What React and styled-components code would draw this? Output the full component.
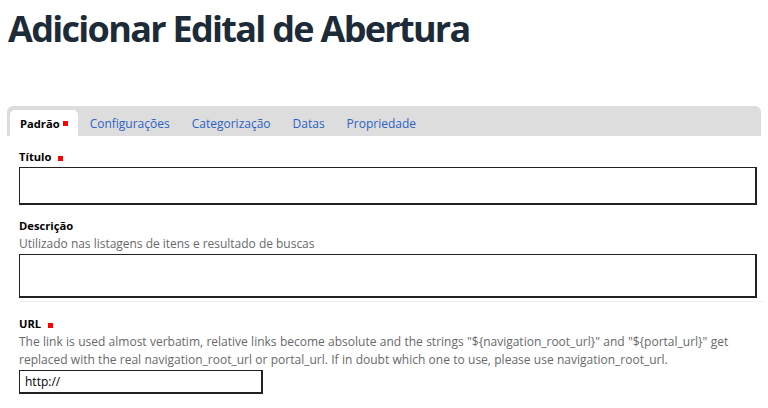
import React from 'react';
import styled, { createGlobalStyle } from 'styled-components';

const GlobalStyle = createGlobalStyle`
  body {
    margin: 0;
    background: #ffffff;
    font-family: "Open Sans", "Liberation Sans", sans-serif;
    color: #000;
  }
`;

const URL_HELP =
  'The link is used almost verbatim, relative links become absolute and the strings ' +
  '"${navigation_root_url}" and "${portal_url}" get replaced with the real ' +
  'navigation_root_url or portal_url. If in doubt which one to use, please use navigation_root_url.';

const TABS = ['Configurações', 'Categorização', 'Datas', 'Propriedade'];

const Page = styled.div`
  width: 768px;
  height: 408px;
  overflow: hidden;
`;

const Heading = styled.h1`
  margin: 0;
  padding: 4px 0 0 8px;
  font-size: 36px;
  line-height: 50px;
  font-weight: 700;
  letter-spacing: -1.7px;
  color: #1d2a38;
  height: 102px;
`;

const TabBar = styled.nav`
  display: flex;
  align-items: flex-end;
  margin-left: 7px;
  width: 754px;
  height: 30px;
  padding: 0 3px;
  box-sizing: border-box;
  background: #dddddd;
  border-radius: 6px 6px 0 0;
`;

const Tab = styled.a`
  display: flex;
  align-items: center;
  height: 26px;
  padding: 0 ${({ $active }) => ($active ? '10px' : '11px')};
  margin-right: ${({ $active }) => ($active ? '1px' : '0')};
  font-size: ${({ $active }) => ($active ? '11.2px' : '12px')};
  font-weight: ${({ $active }) => ($active ? 700 : 400)};
  color: ${({ $active }) => ($active ? '#000' : '#2b62c6')};
  background: ${({ $active }) => ($active ? '#fff' : 'transparent')};
  border-radius: 5px 5px 0 0;
  text-decoration: none;
`;

const Required = styled.span`
  display: inline-block;
  width: 5px;
  height: 5px;
  background: #ff0000;
  margin-left: ${({ $gap }) => $gap}px;
  vertical-align: middle;
`;

const Form = styled.div`
  display: flex;
  flex-direction: column;
  padding: 12px 0 0 19px;
`;

const Field = styled.div`
  display: flex;
  flex-direction: column;
  padding-bottom: ${({ $sep }) => ($sep ? '3px' : '0')};
  margin-bottom: ${({ $gap }) => $gap}px;
  border-bottom: ${({ $sep }) => ($sep ? '1px solid #f2f2f2' : 'none')};
  margin-right: ${({ $sep }) => ($sep ? '4px' : '0')};
`;

const Label = styled.label`
  font-size: 11.2px;
  font-weight: 700;
  line-height: 18px;
  color: #000;
`;

const Help = styled.div`
  font-size: 12px;
  letter-spacing: ${({ $track }) => $track || 0}px;
  word-spacing: ${({ $words }) => $words || 0}px;
  line-height: 18px;
  color: #696969;
  max-width: 730px;
`;

const TextInput = styled.input`
  box-sizing: border-box;
  width: ${({ $w }) => $w}px;
  height: ${({ $h }) => $h}px;
  margin-top: 1px;
  border: 1px solid #222;
  border-bottom-width: 2px;
  border-right-width: 2px;
  padding: 0 5px;
  font-family: "Open Sans", "Liberation Sans", sans-serif;
  font-size: 12px;
  color: #000;
  background: #fff;
  outline: none;
`;

export default function App() {
  return (
    <Page>
      <GlobalStyle />
      <Heading>Adicionar Edital de Abertura</Heading>
      <TabBar>
        <Tab $active>Padrão<Required $gap={3} /></Tab>
        {TABS.map((t) => (
          <Tab key={t}>{t}</Tab>
        ))}
      </TabBar>
      <Form>
        <Field $gap={12}>
          <Label>Título<Required $gap={7} /></Label>
          <TextInput $w={738} $h={38} />
        </Field>
        <Field $gap={13} $sep>
          <Label>Descrição</Label>
          <Help $track={-0.02}>Utilizado nas listagens de itens e resultado de buscas</Help>
          <TextInput $w={738} $h={44} />
        </Field>
        <Field $gap={0}>
          <Label>URL<Required $gap={7} /></Label>
          <Help $words={0.2}>{URL_HELP}</Help>
          <TextInput $w={244} $h={24} defaultValue="http://" />
        </Field>
      </Form>
    </Page>
  );
}
